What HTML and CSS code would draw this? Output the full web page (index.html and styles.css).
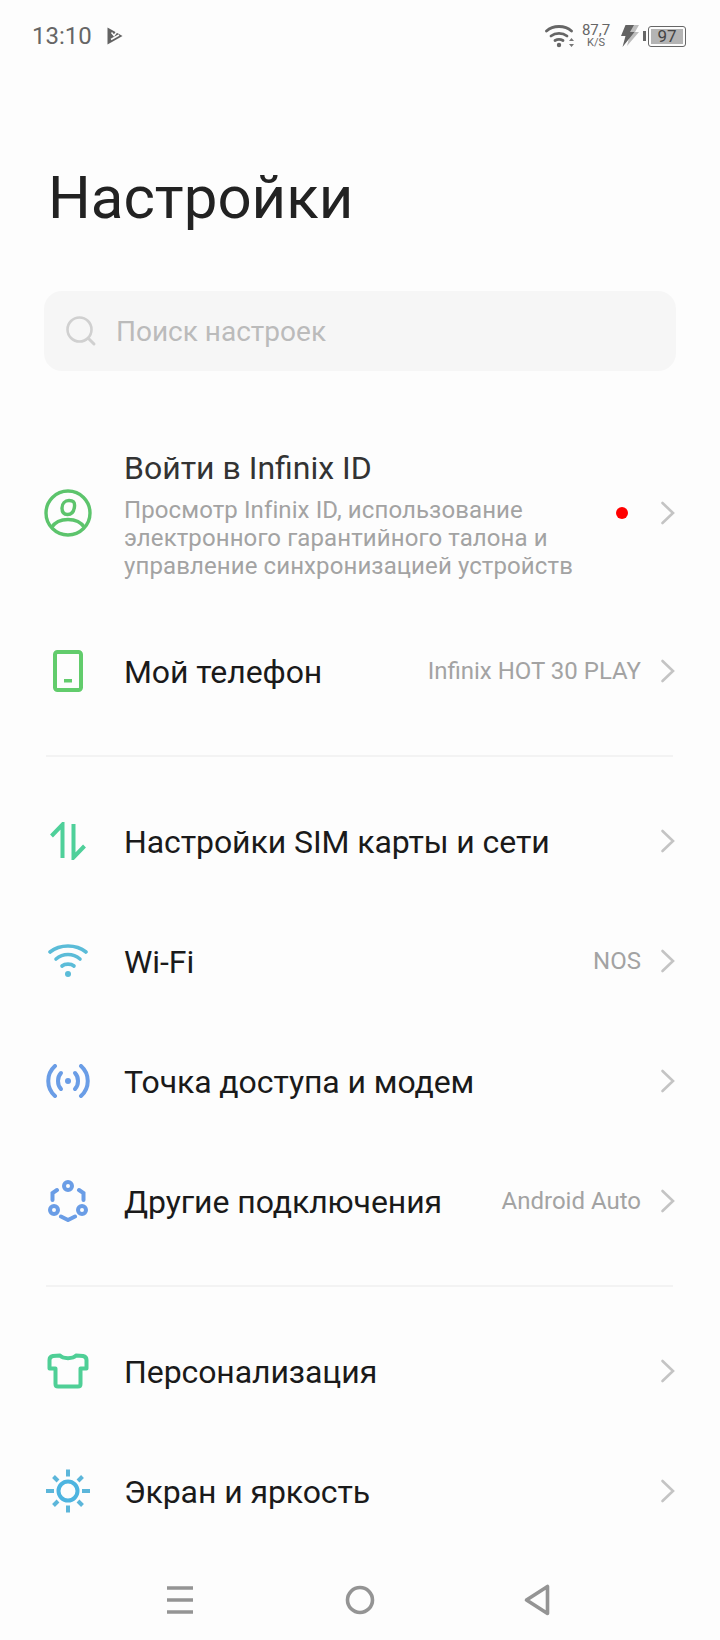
FILE: index.html
```html
<!DOCTYPE html>
<html>

  <head>
    <title>Настройки</title>
    <link rel="stylesheet" href="styles.css">
  </head>

  <body>
    <div id="screen">
      <div class="status-bar">
        <span class="clock">13:10</span>
        <svg class="play-icon" width="16" height="18" viewBox="0 0 16 18">
          <path d="M0.500 0.500 15.500 9 0.500 17.500z" fill="#636363"/>
          <path d="M4.500 5.500 7 8.500 11.500 2.500M4 12.500 12 8" fill="none" stroke="#fdfdfd" stroke-width="1.500"/>
        </svg>
        <div class="status-right">
          <svg width="30" height="24" viewBox="0 0 30 24">
            <g fill="none" stroke="#666" stroke-width="2.800" stroke-linecap="round">
              <path d="M1.500 7C8 1 20 1 26.500 7"/>
              <path d="M6 12C10.500 8.500 17.500 8.500 22 12"/>
              <path d="M10 16.500C12.500 15 15.500 15 18 16.500"/>
            </g>
            <circle cx="14" cy="21" r="2.200" fill="#666"/>
            <path d="M24 17h5l-2.500-3zM24 20h5l-2.500 3z" fill="#777"/>
          </svg>
          <div class="net-speed"><span>87,7</span><span class="net-unit">K/S</span></div>
          <svg class="bolt" width="18" height="22" viewBox="0 0 18 22">
            <path d="M8 0h10l-4 7h4L6 21l2.500-10H5z" fill="#bdbdbd"/>
            <path d="M4.500 0h8.500l-4 7h4.500L1.500 22l3-11H0z" fill="#636363"/>
          </svg>
          <div class="battery">
            <div class="battery-cap"></div>
            <div class="battery-body">
              <div class="battery-fill">97</div>
            </div>
          </div>
        </div>
      </div>

      <h1 class="page-title">Настройки</h1>

      <div class="search">
        <svg width="32" height="32" viewBox="0 0 32 32">
          <circle cx="14.500" cy="14.500" r="12" fill="none" stroke="#d0d0d0" stroke-width="2.600"/>
          <path d="M23.500 23.500 29 29" stroke="#d0d0d0" stroke-width="3" stroke-linecap="round"/>
        </svg>
        <span>Поиск настроек</span>
      </div>

      <div class="row row-account">
        <div class="row-icon">
          <svg width="48" height="48" viewBox="0 0 48 48">
            <g fill="none" stroke="#5cc46c" stroke-width="3.400">
              <circle cx="24" cy="24" r="22"/>
              <path d="M25 11.500c4 0 6 1.500 5.500 6-.5 5-3 8-7 8-3.500 0-5.500-2.500-5.500-6.500 0-4.500 3-7.500 7-7.500z"/>
              <path d="M7.500 38.500C11 33 17 30.500 24 30.500S37 33 40.500 38.500"/>
            </g>
          </svg>
        </div>
        <div class="row-text">
          <div class="account-title">Войти в Infinix ID</div>
          <div class="account-desc">Просмотр Infinix ID, использование электронного гарантийного талона и управление синхронизацией устройств</div>
        </div>
        <div class="red-dot"></div>
        <svg class="chevron" width="16" height="24" viewBox="0 0 16 24"><path d="M2.500 2 13 12 2.500 22" fill="none" stroke="#c4c4c4" stroke-width="2.600" stroke-linecap="round"/></svg>
      </div>

      <div class="row">
        <div class="row-icon">
          <svg width="30" height="42" viewBox="0 0 30 42">
            <rect x="2" y="2" width="26" height="38" rx="2.500" fill="none" stroke="#62cc6c" stroke-width="4"/>
            <rect x="11" y="29" width="8" height="3.500" fill="#62cc6c"/>
          </svg>
        </div>
        <div class="row-label">Мой телефон</div>
        <div class="row-value">Infinix HOT 30 PLAY</div>
        <svg class="chevron" width="16" height="24" viewBox="0 0 16 24"><path d="M2.500 2 13 12 2.500 22" fill="none" stroke="#c4c4c4" stroke-width="2.600" stroke-linecap="round"/></svg>
      </div>

      <div class="divider"></div>

      <div class="row first-row">
        <div class="row-icon">
          <svg width="38" height="38" viewBox="0 0 38 38">
            <path d="M2.500 14 13.500 2.500V36M35.500 24 24.500 35.500V2" fill="none" stroke="#4fd09a" stroke-width="4"/>
          </svg>
        </div>
        <div class="row-label">Настройки SIM карты и сети</div>
        <svg class="chevron" width="16" height="24" viewBox="0 0 16 24"><path d="M2.500 2 13 12 2.500 22" fill="none" stroke="#c4c4c4" stroke-width="2.600" stroke-linecap="round"/></svg>
      </div>

      <div class="row">
        <div class="row-icon">
          <svg width="40" height="34" viewBox="0 0 40 34">
            <g fill="none" stroke="#5bbcd8" stroke-width="3.600" stroke-linecap="round">
              <path d="M2 8C12 0 28 0 38 8"/>
              <path d="M8 15C15 9 25 9 32 15"/>
              <path d="M14 22C17 19.500 23 19.500 26 22"/>
            </g>
            <circle cx="20" cy="30" r="3" fill="#5bbcd8"/>
          </svg>
        </div>
        <div class="row-label">Wi-Fi</div>
        <div class="row-value">NOS</div>
        <svg class="chevron" width="16" height="24" viewBox="0 0 16 24"><path d="M2.500 2 13 12 2.500 22" fill="none" stroke="#c4c4c4" stroke-width="2.600" stroke-linecap="round"/></svg>
      </div>

      <div class="row">
        <div class="row-icon">
          <svg width="44" height="34" viewBox="0 0 44 34">
            <g fill="none" stroke="#6a9de6" stroke-width="4" stroke-linecap="round">
              <path d="M9 2C0 10 0 24 9 32"/>
              <path d="M35 2C44 10 44 24 35 32"/>
              <path d="M15 9C11 13 11 21 15 25"/>
              <path d="M29 9C33 13 33 21 29 25"/>
            </g>
            <circle cx="22" cy="17" r="3" fill="#6a9de6"/>
          </svg>
        </div>
        <div class="row-label">Точка доступа и модем</div>
        <svg class="chevron" width="16" height="24" viewBox="0 0 16 24"><path d="M2.500 2 13 12 2.500 22" fill="none" stroke="#c4c4c4" stroke-width="2.600" stroke-linecap="round"/></svg>
      </div>

      <div class="row">
        <div class="row-icon">
          <svg width="40" height="42" viewBox="0 0 40 42">
            <g fill="none" stroke="#6a9de6" stroke-width="4">
              <circle cx="20" cy="6" r="4"/>
              <circle cx="6" cy="30" r="4"/>
              <circle cx="34" cy="30" r="4"/>
              <path d="M9 10 4.500 13V20M31 10 35.500 13V20M13 36.500 20 40 27 36.500" stroke-linecap="round"/>
            </g>
          </svg>
        </div>
        <div class="row-label">Другие подключения</div>
        <div class="row-value">Android Auto</div>
        <svg class="chevron" width="16" height="24" viewBox="0 0 16 24"><path d="M2.500 2 13 12 2.500 22" fill="none" stroke="#c4c4c4" stroke-width="2.600" stroke-linecap="round"/></svg>
      </div>

      <div class="divider"></div>

      <div class="row first-row">
        <div class="row-icon">
          <svg width="42" height="36" viewBox="0 0 42 36">
            <path d="M13 2.500C16 6 26 6 29 2.500L36 3C38 3.500 39.500 5 39.500 7V15.500H33.500V31C33.500 32.500 32.500 33.500 31 33.500H11C9.500 33.500 8.500 32.500 8.500 31V15.500H2.500V7C2.500 5 4 3.500 6 3z" fill="none" stroke="#4fcf96" stroke-width="4" stroke-linejoin="round"/>
          </svg>
        </div>
        <div class="row-label">Персонализация</div>
        <svg class="chevron" width="16" height="24" viewBox="0 0 16 24"><path d="M2.500 2 13 12 2.500 22" fill="none" stroke="#c4c4c4" stroke-width="2.600" stroke-linecap="round"/></svg>
      </div>

      <div class="row">
        <div class="row-icon">
          <svg width="46" height="46" viewBox="0 0 46 46">
            <circle cx="23" cy="23" r="9.500" fill="none" stroke="#4db4e0" stroke-width="4"/>
            <path d="M23 1.500V8.500M23 37.500V44.500M1 23H9M37 23H45M8.500 8.500 13 13M37.500 8.500 33 13M8.500 37.500 13 33M37.500 37.500 33 33" fill="none" stroke="#5cb6da" stroke-width="4"/>
          </svg>
        </div>
        <div class="row-label">Экран и яркость</div>
        <svg class="chevron" width="16" height="24" viewBox="0 0 16 24"><path d="M2.500 2 13 12 2.500 22" fill="none" stroke="#c4c4c4" stroke-width="2.600" stroke-linecap="round"/></svg>
      </div>

      <div class="nav-bar">
        <svg width="28" height="30" viewBox="0 0 28 30">
          <path d="M1 3H27M1 15H27M1 27H27" stroke="#949494" stroke-width="3.600"/>
        </svg>
        <svg class="nav-home" width="30" height="30" viewBox="0 0 30 30">
          <circle cx="15" cy="15" r="12.500" fill="none" stroke="#949494" stroke-width="3.600"/>
        </svg>
        <svg width="26" height="32" viewBox="0 0 26 32">
          <path d="M23.500 2.500V29.500L2.500 16z" fill="none" stroke="#949494" stroke-width="3.600" stroke-linejoin="round"/>
        </svg>
      </div>
    </div>
  </body>

</html>
```
FILE: styles.css
```css
html,
body {
  margin: 0;
  padding: 0;
}

#screen {
  width: 720px;
  height: 1640px;
  background-color: #fdfdfd;
  font-family: Roboto, sans-serif;
  color: #1a1a1a;
  overflow: hidden;
  display: flex;
  flex-direction: column;
}

.status-bar {
  height: 72px;
  flex: none;
  box-sizing: border-box;
  padding: 0 34px 0 32px;
  display: flex;
  align-items: center;
  color: #666;
}

.clock {
  font-size: 24px;
}

.play-icon {
  margin-left: 15px;
}

.status-right {
  margin-left: auto;
  display: flex;
  align-items: center;
}

.net-speed {
  display: flex;
  flex-direction: column;
  align-items: center;
  margin-left: 6px;
  font-size: 15px;
  line-height: 13px;
  width: 30px;
}

.net-unit {
  font-size: 11px;
  line-height: 11px;
}

.bolt {
  margin-left: 10px;
}

.battery {
  display: flex;
  align-items: center;
  margin-left: 4px;
}

.battery-cap {
  width: 3px;
  height: 10px;
  background-color: #666;
}

.battery-body {
  width: 32px;
  height: 15px;
  margin-left: 2px;
  border: 1.500px solid #666;
  border-radius: 3px;
  padding: 2px;
  display: flex;
}

.battery-fill {
  width: 100%;
  background-color: #b4b4b4;
  color: #444;
  font-size: 17px;
  line-height: 15px;
  text-align: center;
}

.page-title {
  margin: 82px 0 0 48px;
  font-size: 60px;
  font-weight: 400;
  line-height: 88px;
  color: #222;
  flex: none;
}

.search {
  margin: 49px 44px 0;
  height: 80px;
  flex: none;
  border-radius: 18px;
  background-color: #f6f6f6;
  display: flex;
  align-items: center;
  padding-left: 21px;
  font-size: 28px;
  color: #bbb;
}

.search span {
  margin-left: 19px;
}

.row {
  height: 120px;
  display: flex;
  align-items: center;
  padding: 0 44px;
  flex: none;
}

.row-icon {
  width: 48px;
  display: flex;
  justify-content: center;
  flex: none;
}

.row-label {
  margin-left: 32px;
  padding-top: 1px;
  font-size: 32px;
  letter-spacing: -0.08px;
  color: #1a1a1a;
}

.row-value {
  margin-left: auto;
  font-size: 24px;
  color: #a3a3a3;
}

.chevron {
  flex: none;
  margin-left: 19px;
}

.row-label + .chevron {
  margin-left: auto;
}

.row-account {
  height: 196px;
  margin-top: 44px;
}

.row-text {
  margin-left: 32px;
  width: 460px;
}

.account-title {
  font-size: 32px;
  line-height: 42px;
  margin-bottom: 7px;
  color: #333;
}

.account-desc {
  font-size: 24px;
  line-height: 28px;
  letter-spacing: 0.1px;
  color: #a3a3a3;
}

.red-dot {
  width: 12px;
  height: 12px;
  border-radius: 50%;
  background-color: #f00;
  margin-left: auto;
}

.row-account .chevron {
  margin-left: 32px;
}

.divider {
  height: 2px;
  margin: 24px 47px 0 46px;
  background-color: #f3f3f3;
  flex: none;
}

.first-row {
  margin-top: 24px;
}

.nav-bar {
  margin-top: auto;
  height: 80px;
  flex: none;
  display: flex;
  align-items: center;
  justify-content: space-between;
  padding: 0 170px 0 166px;
}

.nav-home {
  margin-left: 2px;
}
```
